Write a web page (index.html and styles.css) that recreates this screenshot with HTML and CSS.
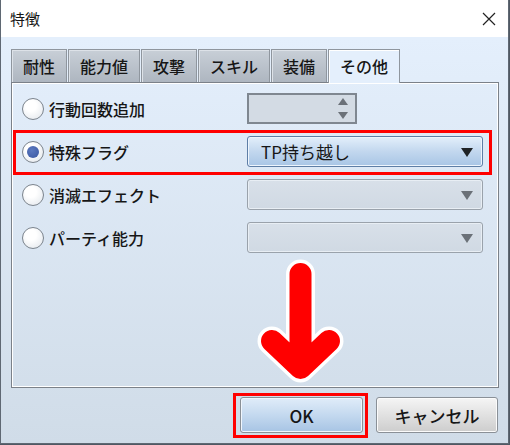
FILE: index.html
```html
<!DOCTYPE html>
<html lang="ja">
<head>
    <meta charset="UTF-8">
    <title>特徴</title>
    <link rel="stylesheet" href="styles.css">
</head>
<body>
<div class="window">
    <div class="titlebar">
        <span>特徴</span>
        <svg class="close" width="14" height="14" viewBox="0 0 14 14">
            <path d="M1 1L13 13M13 1L1 13" stroke="#222" stroke-width="1.2" fill="none"/>
        </svg>
    </div>
    <div class="content">
        <div class="tabs">
            <div class="tab">耐性</div>
            <div class="tab">能力値</div>
            <div class="tab">攻撃</div>
            <div class="tab">スキル</div>
            <div class="tab">装備</div>
            <div class="tab active">その他</div>
        </div>
        <div class="panel">
            <div class="row">
                <label class="opt"><span class="radio"></span>行動回数追加</label>
                <div class="spin">
                    <span class="up"></span>
                    <span class="down"></span>
                </div>
            </div>
            <div class="row">
                <label class="opt"><span class="radio checked"></span>特殊フラグ</label>
                <div class="combo active">TP持ち越し<span class="caret"></span></div>
            </div>
            <div class="row">
                <label class="opt"><span class="radio"></span>消滅エフェクト</label>
                <div class="combo"><span class="caret"></span></div>
            </div>
            <div class="row">
                <label class="opt"><span class="radio"></span>パーティ能力</label>
                <div class="combo"><span class="caret"></span></div>
            </div>
        </div>
        <div class="buttons">
            <button class="btn primary">OK</button>
            <button class="btn">キャンセル</button>
        </div>
    </div>

    <!-- red markers -->
    <div class="mark mark-flag"></div>
    <div class="mark mark-ok"></div>
    <svg class="arrow" width="100" height="140" viewBox="0 0 100 140">
        <g fill="none" stroke-linecap="round" stroke-linejoin="round">
            <path d="M50.5 24V116M22 91L50.5 118L79 91" stroke="#fff" stroke-width="29"/>
            <path d="M50.5 24V116M22 91L50.5 118L79 91" stroke="#f00" stroke-width="22"/>
        </g>
    </svg>
</div>
</body>
</html>
```

FILE: styles.css
```css
* {
    margin: 0;
    padding: 0;
    box-sizing: border-box;
}

body {
    background: #4f5863;
    font-family: "Noto Sans CJK JP", "Noto Sans", sans-serif;
    color: #161616;
}

.window {
    position: relative;
    width: 509px;
    height: 444px;
    border: 1px solid #5f6873;
    border-top: none;
    background: #fff;
}

.titlebar {
    display: flex;
    align-items: center;
    justify-content: space-between;
    height: 37px;
    padding: 0 12px 0 9px;
    background: #fff;
    font-size: 15px;
}

.content {
    height: 406px;
    padding: 12px 9px 0 10px;
    background: linear-gradient(#e4effc, #d0dce8);
}

.tabs {
    display: flex;
    align-items: flex-end;
    gap: 1px;
    height: 33px;
}

.tab {
    height: 33px;
    padding: 0 11px;
    border: 1px solid #8f969e;
    border-bottom: none;
    background: linear-gradient(#c8cfd7, #aeb6c0);
    box-shadow: inset 1px 1px 0 #dde2e8;
    font-size: 16px;
    font-weight: 500;
    line-height: 32px;
}

.tab.active {
    position: relative;
    height: 34px;
    margin-bottom: -1px;
    border-color: #8f969e;
    background: #e4effc;
    box-shadow: inset 1px 1px 0 #fff;
    z-index: 1;
}

.panel {
    height: 306px;
    padding: 4px 0 0 10px;
    border: 1px solid #7b8189;
    box-shadow: inset 0 0 0 1px #fff;
}

.row {
    display: grid;
    grid-template-columns: 225px 236px;
    align-items: center;
    height: 43px;
}

.opt {
    display: flex;
    align-items: center;
    gap: 5px;
    font-size: 16px;
    font-weight: 500;
}

.radio {
    width: 22px;
    height: 22px;
    border: 1px solid #7c848d;
    border-radius: 50%;
    background: radial-gradient(circle at 40% 35%, #fff 30%, #dfe4ea);
    display: flex;
    align-items: center;
    justify-content: center;
}

.radio.checked::after {
    content: "";
    width: 12px;
    height: 12px;
    border-radius: 50%;
    background: radial-gradient(circle at 40% 35%, #5b79c0, #3a57a0);
}

.spin {
    position: relative;
    width: 110px;
    height: 31px;
    border: 2px solid #7f8790;
    background: #d3dbe4;
}

.spin span {
    position: absolute;
    right: 7px;
    width: 0;
    height: 0;
    border-left: 5px solid transparent;
    border-right: 5px solid transparent;
}

.spin .up {
    top: 3px;
    border-bottom: 7px solid #6b7178;
}

.spin .down {
    bottom: 3px;
    border-top: 7px solid #6b7178;
}

.combo {
    position: relative;
    height: 31px;
    padding-left: 13px;
    border: 1px solid #9aa2ab;
    border-radius: 3px;
    background: linear-gradient(#d8e0e9, #d0d9e3);
    box-shadow: inset 0 0 0 1px #e8eef4;
    font-size: 17px;
    line-height: 29px;
}

.combo.active {
    border-color: #5e7ea6;
    background: linear-gradient(#e3effb, #c2d7ee 50%, #a8c5e5);
    box-shadow: inset 0 0 0 1px #eef5fd;
}

.caret {
    position: absolute;
    right: 9px;
    top: 11px;
    width: 0;
    height: 0;
    border-left: 6px solid transparent;
    border-right: 6px solid transparent;
    border-top: 9px solid #6b7178;
}

.combo.active .caret {
    border-top-color: #1f2326;
}

.buttons {
    display: flex;
    justify-content: flex-end;
    gap: 13px;
    padding: 9px 1px 0 0;
}

.btn {
    width: 122px;
    height: 36px;
    border: 1px solid #8a9097;
    border-radius: 3px;
    background: linear-gradient(#f5f5f5, #e1e1e1 50%, #cdcdcd);
    box-shadow: inset 0 0 0 1px #fbfbfb;
    font-family: "Noto Sans CJK JP", "Noto Sans", sans-serif;
    font-size: 17px;
    font-weight: 500;
    color: #161616;
}

.btn.primary {
    width: 123px;
    background: linear-gradient(#e0ecf9, #c4d9ef 50%, #a7c4e4);
    box-shadow: inset 0 0 0 1px #f0f6fd;
}

.mark {
    position: absolute;
    border: 3px solid #f00;
}

.mark-flag {
    left: 12px;
    top: 130px;
    width: 479px;
    height: 45px;
}

.mark-ok {
    left: 232px;
    top: 393px;
    width: 135px;
    height: 45px;
}

.arrow {
    position: absolute;
    left: 249px;
    top: 250px;
}
```
